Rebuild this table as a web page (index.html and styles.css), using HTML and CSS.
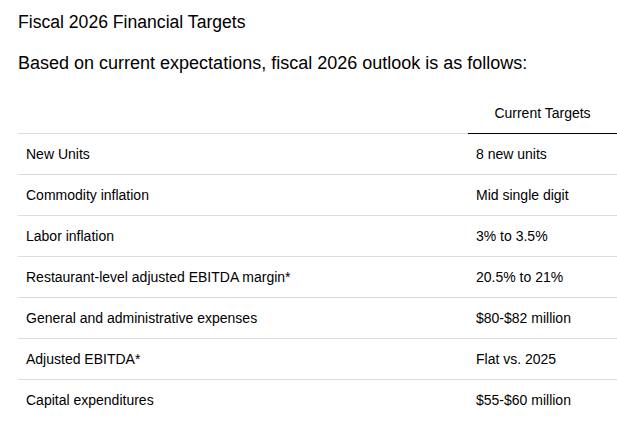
FILE: index.html
```html
<!DOCTYPE html>
<html lang="en">
<head>
<meta charset="utf-8">
<title>Fiscal 2026 Financial Targets</title>
<link rel="stylesheet" href="styles.css">
</head>
<body>
<div class="page">
  <h2 class="title">Fiscal 2026 Financial Targets</h2>
  <p class="intro">Based on current expectations, fiscal 2026 outlook is as follows:</p>
  <table class="targets">
    <thead>
      <tr>
        <th class="label-head"></th>
        <th class="value-head">Current Targets</th>
      </tr>
    </thead>
    <tbody>
      <tr><td>New Units</td><td class="value">8 new units</td></tr>
      <tr><td>Commodity inflation</td><td class="value">Mid single digit</td></tr>
      <tr><td>Labor inflation</td><td class="value">3% to 3.5%</td></tr>
      <tr><td>Restaurant-level adjusted EBITDA margin*</td><td class="value">20.5% to 21%</td></tr>
      <tr><td>General and administrative expenses</td><td class="value">$80-$82 million</td></tr>
      <tr><td>Adjusted EBITDA*</td><td class="value">Flat vs. 2025</td></tr>
      <tr><td>Capital expenditures</td><td class="value">$55-$60 million</td></tr>
    </tbody>
  </table>
</div>
</body>
</html>
```

FILE: styles.css
```css
html, body {
  margin: 0;
  padding: 0;
  background: #ffffff;
}

body {
  font-family: Arial, "Liberation Sans", Helvetica, sans-serif;
  color: #000000;
  overflow: hidden;
}

.page {
  padding: 10px 0 0 18px;
}

.title {
  margin: 0;
  font-size: 17.6px;
  font-weight: normal;
  line-height: 24px;
}

.intro {
  margin: 17px 0 0;
  font-size: 18px;
  line-height: 24px;
}

.targets {
  margin-top: 18px;
  width: 100%;
  border-collapse: collapse;
  font-size: 14px;
}

.targets th,
.targets td {
  height: 40px;
  padding: 0 8px;
  text-align: left;
  vertical-align: middle;
  font-weight: normal;
  border-bottom: 1px solid #dcdcdc;
}

.targets th.value-head {
  width: 133px;
  text-align: center;
  border-bottom: 1px solid #000000;
}

.targets tbody tr:last-child td {
  border-bottom: none;
}
```
